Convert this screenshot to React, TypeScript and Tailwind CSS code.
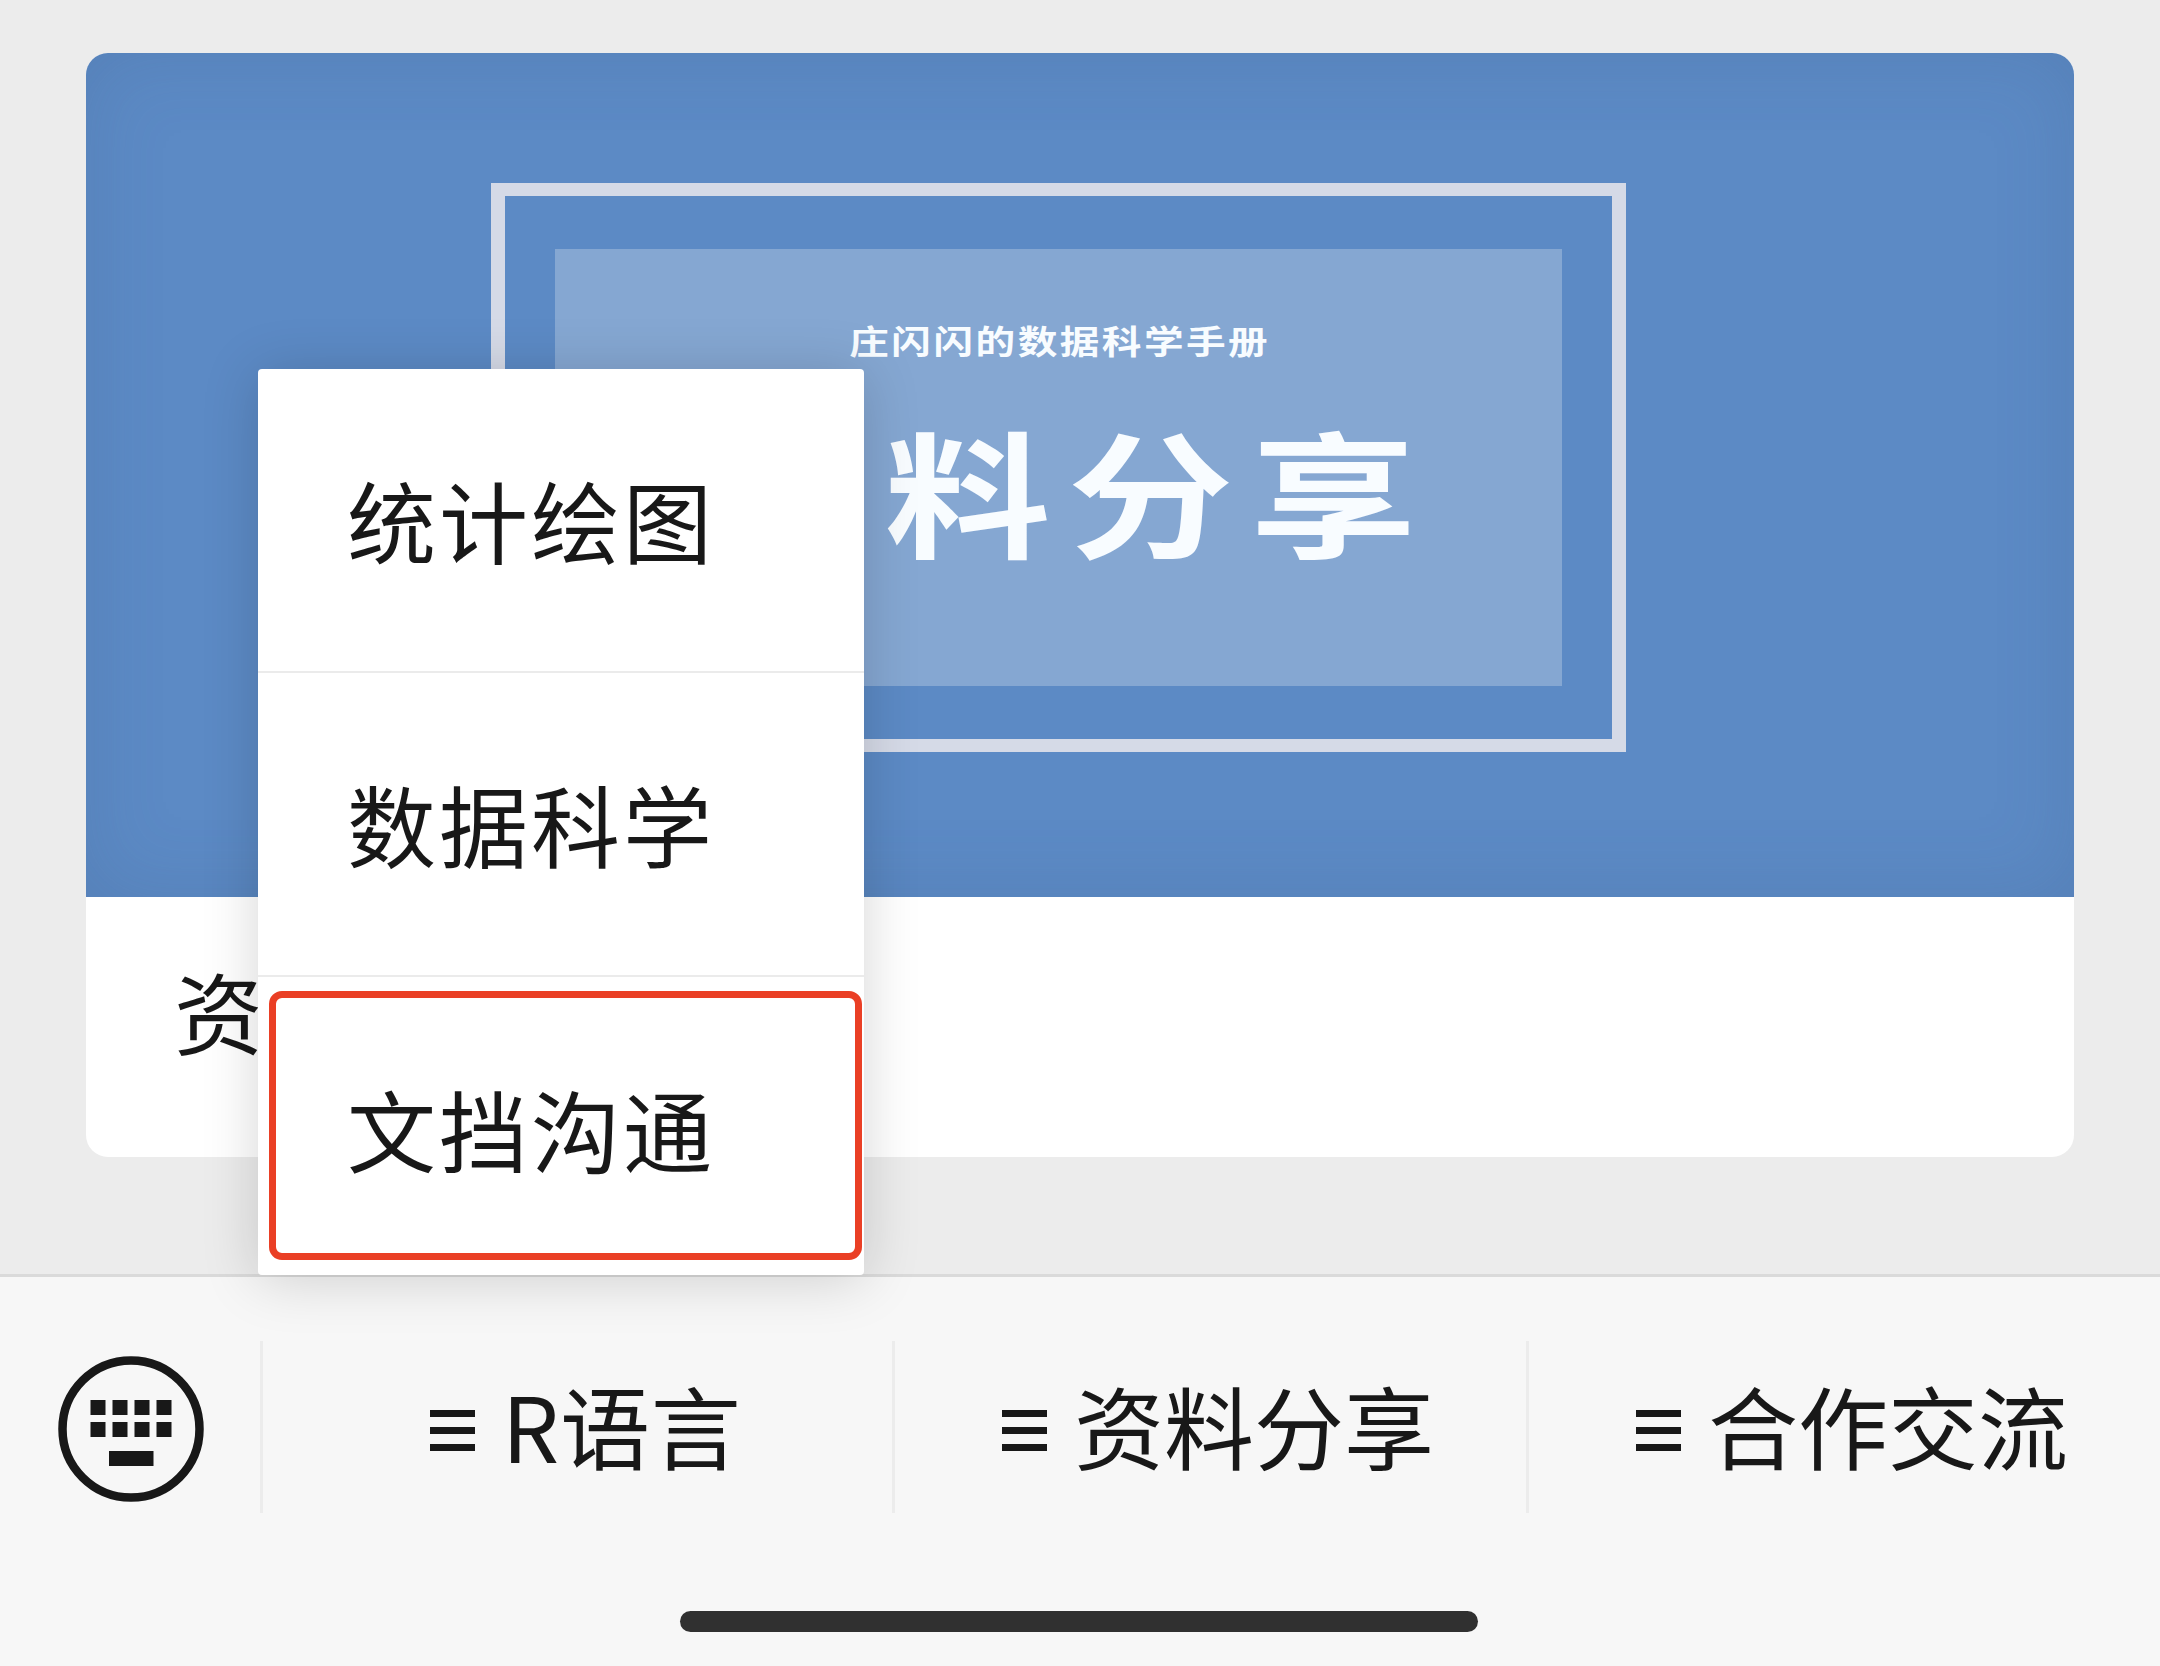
const menuItems = ["统计绘图", "数据科学", "文挡沟通"];

const tabs = [
  { label: "R语言", className: "w-[632px] pl-[167px]", text: "tracking-[0.8px]" },
  { label: "资料分享", className: "w-[634px] pl-[107px]", text: "tracking-[0px]" },
  { label: "合作交流", className: "flex-1 pl-[107px]", text: "tracking-[0px]" },
];

const KeyboardIcon = () => (
  <svg width="146" height="146" viewBox="0 0 146 146" fill="#181818">
    <circle cx="73" cy="73" r="68.5" fill="none" stroke="#181818" strokeWidth="8.5" />
    {[44, 66].map((y) =>
      [32.5, 54.5, 76.5, 98.5].map((x) => (
        <rect key={`${x}-${y}`} x={x} y={y} width="15" height="15" />
      ))
    )}
    <rect x="51" y="95" width="44.5" height="15" />
  </svg>
);

const MenuIcon = () => (
  <div className="mt-[6px] flex w-[45px] shrink-0 flex-col gap-[10px]">
    <span className="h-[7px] bg-[#181818]" />
    <span className="h-[7px] bg-[#181818]" />
    <span className="h-[7px] bg-[#181818]" />
  </div>
);

const Cover = () => (
  <div className="h-[844px] bg-[#5c8ac5] pl-[405px] pt-[130px] shadow-[inset_0_0_80px_rgba(60,90,130,0.2)]">
    <div className="h-[569px] w-[1135px] border-x-[14px] border-y-[13px] border-[#d5dae7] px-[50px] py-[53px]">
      <div className="flex h-[437px] flex-col items-center bg-[#85a7d2] text-[#f8fcff]">
        <p className="mt-[65px] scale-x-[1.22] pl-[2px] text-[32.5px] font-bold leading-[52px] tracking-[2px] whitespace-nowrap">
          庄闪闪的数据科学手册
        </p>
        <h1 className="mt-[33px] scale-x-[1.22] pl-[14px] text-[136px] font-bold leading-[180px] tracking-[14px] whitespace-nowrap">
          资料分享
        </h1>
      </div>
    </div>
  </div>
);

const Popup = () => (
  <div className="absolute left-[258px] top-[369px] h-[906px] w-[606px] rounded-[4px] bg-white shadow-[0_4px_56px_rgba(0,0,0,0.17)]">
    {menuItems.map((item, i) => (
      <div
        key={item}
        className={
          i < 2
            ? "flex h-[304px] items-center border-b-2 border-[#ebebeb] pl-[89px]"
            : "flex h-[304px] items-center pl-[89px]"
        }
      >
        <span className="pb-[3px] text-[89px] leading-[120px] tracking-[3px]">{item}</span>
      </div>
    ))}
    {/* highlight around the last entry */}
    <div className="absolute left-[11px] top-[622px] h-[269px] w-[593px] rounded-[13px] border-[7px] border-[#ea3f25]" />
  </div>
);

export default function App() {
  return (
    <div
      lang="zh-CN"
      className="relative flex h-[1666px] w-[2160px] flex-col overflow-hidden bg-[#ececec] font-['Noto_Sans_CJK_SC',sans-serif] text-[#181818]"
    >
      <main className="h-[1274px] px-[86px] pt-[53px]">
        <div className="h-[1104px] overflow-hidden rounded-[22px] bg-white">
          <Cover />
          <p className="pl-[88px] pt-[53px] text-[89px] leading-[120px]">资料分享</p>
        </div>
      </main>

      <footer className="flex flex-1 flex-col items-center border-t-[3px] border-[#dadada] bg-[#f7f7f7]">
        <div className="mt-[64px] flex h-[172px] w-full">
          <div className="flex w-[260px] items-center pl-[58px] pt-[3px]">
            <KeyboardIcon />
          </div>
          {tabs.map((tab) => (
            <div
              key={tab.label}
              className={`flex items-center border-l-[3px] border-[#ececec] ${tab.className}`}
            >
              <MenuIcon />
              <span
                className={`mb-[7px] ml-[27px] text-[90px] leading-[120px] whitespace-nowrap ${tab.text}`}
              >
                {tab.label}
              </span>
            </div>
          ))}
        </div>
        <div className="mt-[98px] mr-[2px] h-[21px] w-[798px] rounded-full bg-[#303030]" />
      </footer>

      <Popup />
    </div>
  );
}
